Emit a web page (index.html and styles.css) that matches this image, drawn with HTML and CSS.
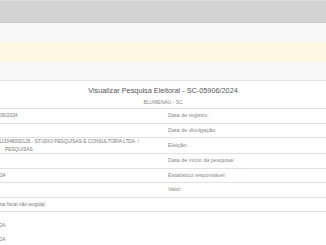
FILE: index.html
```html
<!DOCTYPE html>
<html>
	<head>
		<meta charset="UTF-8">
		<title>Visualizar Pesquisa Eleitoral</title>
		<link rel="stylesheet" href="styles.css">
	</head>
	<body>
		<div class="bands">
			<div class="band band-head"></div>
			<div class="band band-stripe"></div>
			<div class="band band-warn"></div>
			<div class="band band-stripe band-last"></div>
		</div>
		<div class="modal">
			<div class="modal-head">
				<h4 class="title">Visualizar Pesquisa Eleitoral - SC-05906/2024</h4>
				<p class="sub">BLUMENAU - SC</p>
			</div>
			<div class="grid">
				<div class="cell val">12/06/2024</div>
				<div class="cell lbl">Data de registro:</div>

				<div class="cell val"></div>
				<div class="cell lbl">Data de divulgação:</div>

				<div class="cell val"><div>02113048000126 - STUDIO PESQUISAS E CONSULTORIA LTDA. /<br><span class="cont">PESQUISAS</span></div></div>
				<div class="cell lbl">Eleição:</div>

				<div class="cell val"></div>
				<div class="cell lbl">Data de início da pesquisa:</div>

				<div class="cell val">/2024</div>
				<div class="cell lbl">Estatístico responsável:</div>

				<div class="cell val"></div>
				<div class="cell lbl">Valor:</div>

				<div class="cell val">(Nota fiscal não exigida)</div>
				<div class="cell lbl"></div>
			</div>
			<div class="extra">
				<div class="extra-row">LTDA</div>
				<div class="extra-row">LTDA</div>
			</div>
		</div>
	</body>
</html>
```

FILE: styles.css
```css
html, body{
	margin: 0;
	padding: 0;
	background: #fff;
	overflow: hidden;
}
body{
	font-family: "Liberation Sans", Arial, sans-serif;
	color: #777;
}
.band{
	box-sizing: border-box;
}
.band-head{
	height: 23px;
	background: #d3d3d3;
	border-top: 1px solid #dcdcdc;
	border-bottom: 1px solid #cacaca;
}
.band-stripe{
	height: 19px;
	background: #f8f8f8;
}
.band-warn{
	height: 20px;
	background: #fcf6e2;
}
.band-last{
	height: 19px;
	border-bottom: 1px solid #e2e2e2;
}
.modal-head{
	padding: 6px 0 3px;
	border-bottom: 1px solid #dedede;
	text-align: center;
}
.title{
	margin: 0;
	font-size: 7.3px;
	line-height: 8px;
	font-weight: normal;
	color: #555;
}
.sub{
	margin: 4px 0 0;
	font-size: 5px;
	line-height: 6px;
	color: #888;
}
.grid{
	display: grid;
	grid-template-columns: 169.5px 1fr;
	margin-left: -6.5px;
}
.cell{
	box-sizing: border-box;
	min-height: 14.5px;
	display: flex;
	align-items: center;
	line-height: 7.5px;
	border-bottom: 1px solid #e0e0e0;
}
.val{
	font-size: 4.8px;
	color: #777;
}
.cont{
	padding-left: 11.5px;
}
.lbl{
	padding-left: 5px;
	font-size: 5.5px;
	color: #888;
}
.extra{
	margin: 7px 0 0 -6.5px;
}
.extra-row{
	height: 14px;
	line-height: 14px;
	font-size: 4.8px;
	color: #777;
}
```
